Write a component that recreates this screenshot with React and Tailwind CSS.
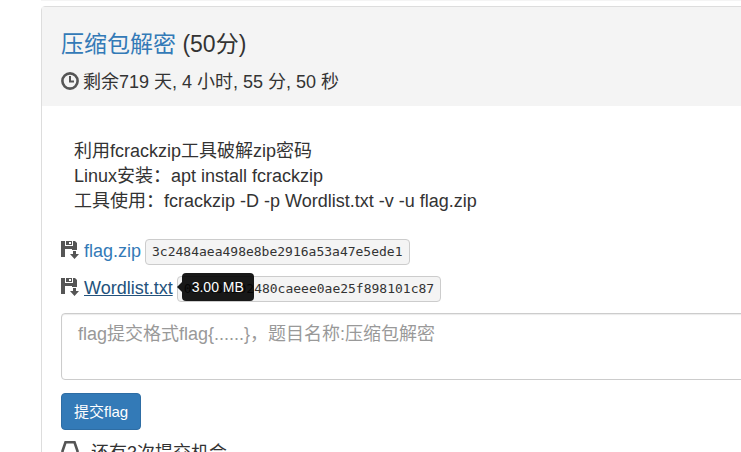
import React from "react";

const sans = "font-['Liberation_Sans','Noto_Sans_CJK_SC',sans-serif]";

function ClockIcon() {
  return (
    <svg className="mb-1 h-[18px] w-[18px] shrink-0" viewBox="0 0 18 18" fill="none" stroke="#555" aria-hidden="true">
      <circle cx="9" cy="9" r="7.6" strokeWidth="2.6" />
      <path d="M9 4v5.500h4" strokeWidth="2" />
    </svg>
  );
}

function SaveFileIcon() {
  return (
    <svg className="mb-1 h-[18px] w-[18px] shrink-0" viewBox="0 0 18 18" fill="#555" aria-hidden="true">
      <path
        fillRule="evenodd"
        d="M0 0H4V5H12V0H14L16 2V9H11V8H4V16H0zM5 0H11V4H5zM8 1V3H10V1z"
      />
      <path d="M12 10h3v3h3l-4.500 5L9 13h3z" />
    </svg>
  );
}

function BellIcon() {
  return (
    <svg className="mb-1 h-[18px] w-[18px] shrink-0" viewBox="0 0 18 18" fill="none" stroke="#555" strokeWidth="2.6" aria-hidden="true">
      <path d="M1.500 17V10L4.500 1.300h9L16.500 10v7z" />
    </svg>
  );
}

function FileRow({ name, hash, size }) {
  return (
    <div className="flex h-[37px] items-center">
      <SaveFileIcon />
      <a
        href={"#" + name}
        className={size ? "ml-[5px] text-[#23527c] underline" : "ml-[5px] text-[#337ab7]"}
      >
        {name}
      </a>
      <span className="relative ml-1">
        <code className="block rounded border border-[#ccc] bg-[#f4f4f4] px-[6px] font-['DejaVu_Sans_Mono',monospace] text-[13px] leading-6 text-[#333]">
          {hash}
        </code>
        {size && (
          <span role="tooltip" className="absolute -top-[3px] left-0 flex items-center">
            <span className="border-y-[5px] border-r-[5px] border-y-transparent border-r-black/90" />
            <span className="rounded bg-black/90 px-[10px] text-[14px] leading-7 whitespace-nowrap text-white">{size}</span>
          </span>
        )}
      </span>
    </div>
  );
}

export default function App() {
  return (
    <div className={"h-screen overflow-hidden bg-white text-[18px] leading-[25px] text-[#333] " + sans}>
      <div className="ml-[41px] h-px bg-[#f4f4f4]" />
      <main className="mt-[5px] ml-[41px] -mr-12 rounded border border-[#ddd]">
        <header className="bg-[#f4f4f4] px-[19px] pt-[22px] pb-[11px]">
          <h1 className="text-[23px] leading-[30px]">
            <a href="#challenge" className="text-[#337ab7]">压缩包解密</a> (50分)
          </h1>
          <div className="mt-[11px] flex items-center gap-1">
            <ClockIcon />
            <span>剩余719 天, 4 小时, 55 分, 50 秒</span>
          </div>
        </header>
        <section className="px-[19px] pt-[33px]">
          <div className="px-[13px] pb-[19px]">
            <p>利用fcrackzip工具破解zip密码</p>
            <p>Linux安装：apt install fcrackzip</p>
            <p>工具使用：fcrackzip -D -p Wordlist.txt -v -u flag.zip</p>
          </div>
          <FileRow name="flag.zip" hash="3c2484aea498e8be2916a53a47e5ede1" />
          <FileRow name="Wordlist.txt" hash="054488202480caeee0ae25f898101c87" size="3.00 MB" />
          <form className="mt-[6px]">
            <textarea
              aria-label="flag"
              placeholder="flag提交格式flag{......}，题目名称:压缩包解密"
              className="block h-[67px] w-full resize-none rounded border border-[#ccc] px-4 py-2 shadow-[inset_0_1px_1px_rgba(0,0,0,0.08)] placeholder:text-[#999]"
            />
            <button
              type="button"
              className="mt-[13px] rounded border border-[#2e6da4] bg-[#337ab7] px-3 text-[15px] leading-[35px] text-white"
            >
              提交flag
            </button>
          </form>
          <div className="mt-[11px] flex items-start gap-3">
            <BellIcon />
            <span>还有3次提交机会</span>
          </div>
        </section>
      </main>
    </div>
  );
}
